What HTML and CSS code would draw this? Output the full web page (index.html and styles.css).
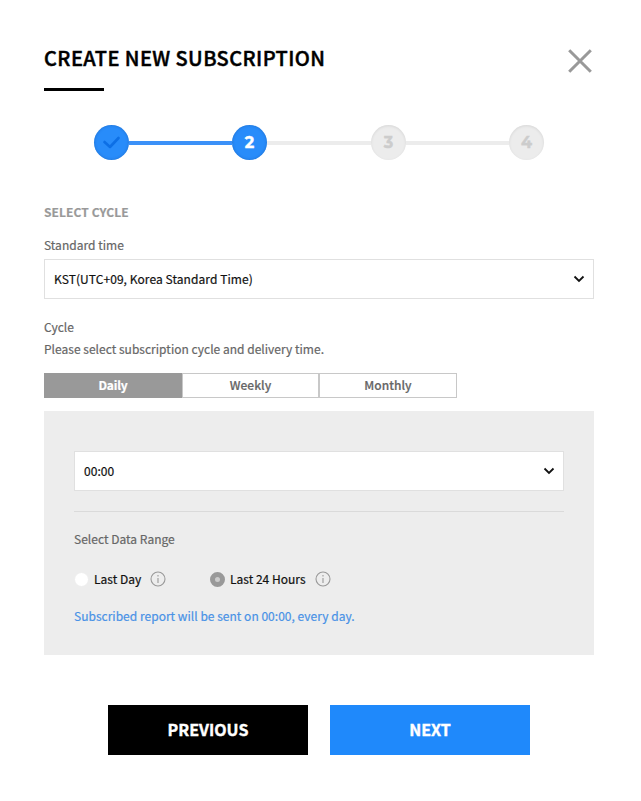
FILE: index.html
```html
<!DOCTYPE html>
<html lang="en">
<head>
<meta charset="utf-8">
<title>Create New Subscription</title>
<link rel="stylesheet" href="styles.css">
</head>
<body>
<main class="dialog">
  <header class="header">
    <h1 class="title"><span>CREATE NEW SUBSCRIPTION</span></h1>
    <button class="close" aria-label="Close"><svg width="24" height="24" viewBox="0 0 24 24"><path d="M1.2 1.2 22.8 22.8M22.8 1.2 1.2 22.8"/></svg></button>
  </header>
  <ol class="steps">
    <li class="step active"><svg width="19" height="15" viewBox="0 0 19 15"><path d="M2.5 7 8 12 16.500 3"/></svg></li>
    <li class="bar done"></li>
    <li class="step active">2</li>
    <li class="bar wide"></li>
    <li class="step">3</li>
    <li class="bar"></li>
    <li class="step">4</li>
  </ol>
  <h2 class="section"><span>SELECT CYCLE</span></h2>
  <p class="label standard"><span>Standard time</span></p>
  <div class="select"><span>KST(UTC+09, Korea Standard Time)</span><svg class="chevron" width="12" height="8" viewBox="0 0 12 8"><path d="M1.500 1.500 6 6 10.500 1.500"/></svg></div>
  <p class="label cycle"><span>Cycle</span></p>
  <p class="label hint"><span class="hint-text">Please select subscription cycle and delivery time.</span></p>
  <div class="tabs">
    <button class="tab selected"><span>Daily</span></button>
    <button class="tab"><span>Weekly</span></button>
    <button class="tab last"><span>Monthly</span></button>
  </div>
  <section class="panel">
    <div class="select"><span>00:00</span><svg class="chevron" width="12" height="8" viewBox="0 0 12 8"><path d="M1.500 1.500 6 6 10.500 1.500"/></svg></div>
    <hr class="rule">
    <p class="label range"><span>Select Data Range</span></p>
    <div class="options">
      <div class="option first"><i class="radio"></i><span>Last Day</span><svg class="info" width="16" height="16" viewBox="0 0 16 16"><circle cx="8" cy="8" r="7"/><path d="M8 7v5M8 4v1.500"/></svg></div>
      <div class="option"><i class="radio checked"></i><span>Last 24 Hours</span><svg class="info" width="16" height="16" viewBox="0 0 16 16"><circle cx="8" cy="8" r="7"/><path d="M8 7v5M8 4v1.500"/></svg></div>
    </div>
    <p class="notice"><span>Subscribed report will be sent on 00:00, every day.</span></p>
  </section>
  <footer class="actions">
    <button class="action"><span>PREVIOUS</span></button>
    <button class="action next"><span>NEXT</span></button>
  </footer>
</main>
</body>
</html>
```
FILE: styles.css
```css
* { box-sizing: border-box; margin: 0; padding: 0; }
body { background: #fff; font-family: "Noto Sans CJK KR", "Noto Sans", sans-serif; font-size: 12px; line-height: 20px; letter-spacing: 0.02px; color: #111; -webkit-text-stroke: 0.2px; }
button { border: 0; background: none; font: inherit; letter-spacing: inherit; color: inherit; }
svg { display: block; fill: none; flex: none; }
.dialog { width: 550px; margin-left: 44px; padding-top: 42px; }
.header { display: flex; justify-content: space-between; height: 83px; }
.title { font-size: 20px; line-height: 32px; font-weight: 500; letter-spacing: 0.42px; color: #000; white-space: nowrap; -webkit-text-stroke: 0.45px; }
.title::after { content: ""; display: block; width: 60px; height: 3px; margin-top: 14px; background: #000; }
.close { width: 24px; height: 24px; margin: 7px 2px 0 0; }
.close path { stroke: #999; stroke-width: 3; }
.steps { display: flex; align-items: center; width: 450px; height: 35px; margin-left: 50px; list-style: none; }
.step { display: flex; align-items: center; justify-content: center; width: 35px; height: 35px; border-radius: 50%; background: #ececec; box-shadow: inset 0 1px 3px rgba(0,0,0,.09); color: #ccc; font-family: Montserrat, "Open Sans", sans-serif; font-size: 16px; font-weight: 700; -webkit-text-stroke: 0.4px; }
.step.active { background: #288cfa; color: #fff; box-shadow: inset 0 0 3px rgba(0,50,120,.35); }
.step path { stroke: #0d6fe5; stroke-width: 2.6; stroke-linecap: round; stroke-linejoin: round; }
.bar { width: 103px; height: 4px; margin-top: 1px; background: #ececec; }
.bar.wide { width: 104px; }
.bar.done { background: #3b91f8; }
.section { margin-top: 42px; font-size: 12px; line-height: 20px; letter-spacing: 0.08px; color: #999; }
.label { color: #666; }
.standard { margin-top: 13px; }
.select { display: flex; justify-content: space-between; align-items: center; height: 40px; padding: 0 8px 0 9px; border: 1px solid #e0e0e0; background: #fff; letter-spacing: 0.07px; }
.standard + .select { margin-top: 4px; }
.chevron path { stroke: #111; stroke-width: 1.8; }
.cycle { margin-top: 18px; }
.hint { margin-top: 2px; }
.tabs { display: flex; width: 413px; height: 25px; margin-top: 14px; }
.tab { width: 137px; padding-bottom: 2px; border: 1px solid #c8c8c8; color: #666; font-weight: 500; line-height: 20px; }
.tab.selected { width: 138px; border-color: #999; background: #999; color: #fff; font-weight: 700; letter-spacing: -0.2px; }
.tab.last { width: 138px; }
.panel { height: 244px; margin-top: 13px; padding: 40px 30px; background: #ededed; }
.rule { height: 1px; margin-top: 20px; border: 0; background: #dadada; }
.range { margin-top: 17px; }
.options { display: flex; margin-top: 20px; }
.option { display: flex; align-items: center; height: 20px; white-space: nowrap; }
.option.first { width: 136px; }
.radio { width: 15px; height: 15px; margin-right: 5px; border: 1px solid #ededed; border-radius: 50%; background: #fff; }
.radio.checked { border: 5px solid #999; background: #ccc; }
.info { margin-left: 9px; }
.info circle, .info path { stroke: #999; stroke-width: 1.1; }
.notice { margin-top: 17px; color: #4992e6; white-space: nowrap; }
.actions { display: flex; gap: 22px; margin: 50px 0 0 64px; }
.action { width: 200px; height: 50px; padding-bottom: 2px; background: #000; color: #fff; font-size: 16px; font-weight: 700; -webkit-text-stroke: 0.4px; }
.action.next { background: #1f89fb; }
```
